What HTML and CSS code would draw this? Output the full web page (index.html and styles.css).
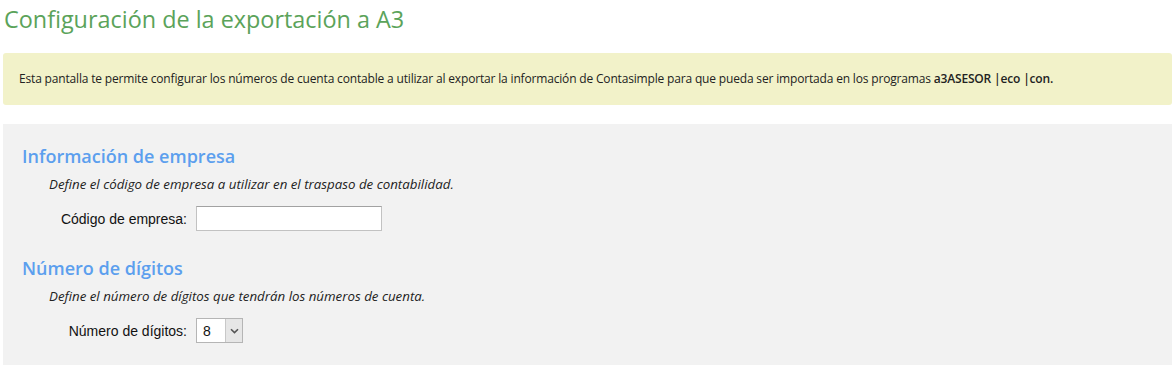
FILE: index.html
```html
<!DOCTYPE html>
<html lang="es">
<head>
    <meta charset="UTF-8">
    <title>Configuración de la exportación a A3</title>
    <link rel="stylesheet" href="styles.css">
</head>
<body>
    <div class="page">
        <h1 class="page-title">Configuración de la exportación a A3</h1>

        <div class="notice">
            Esta pantalla te permite configurar los números de cuenta contable a utilizar al exportar la información de Contasimple para que pueda ser importada en los programas <strong>a3ASESOR |eco |con.</strong>
        </div>

        <div class="panel">
            <h2 class="section-title">Información de empresa</h2>
            <p class="section-desc">Define el código de empresa a utilizar en el traspaso de contabilidad.</p>
            <div class="form-row">
                <label class="form-label" for="companyCode">Código de empresa:</label>
                <input class="text-input" type="text" id="companyCode">
            </div>

            <h2 class="section-title">Número de dígitos</h2>
            <p class="section-desc">Define el número de dígitos que tendrán los números de cuenta.</p>
            <div class="form-row">
                <label class="form-label" for="digits">Número de dígitos:</label>
                <div class="select-box">
                    <select class="select-input" id="digits">
                        <option>8</option>
                        <option>9</option>
                        <option>10</option>
                        <option>11</option>
                        <option>12</option>
                    </select>
                    <span class="select-arrow">
                        <svg width="9" height="6" viewBox="0 0 9 6"><path d="M1 1.2 L4.5 4.6 L8 1.2" fill="none" stroke="#555" stroke-width="1.6"/></svg>
                    </span>
                </div>
            </div>
        </div>
    </div>
</body>
</html>
```

FILE: styles.css
```css
body {
    margin: 0;
    padding: 0;
    background: #fff;
    font-family: 'Open Sans', sans-serif;
    color: #222;
    overflow: hidden;
}

.page {
    padding: 0 1px 0 3px;
}

.page-title {
    font-family: 'Open Sans', sans-serif;
    font-size: 23.4px;
    font-weight: 400;
    color: #5ba35a;
    margin: 0;
    padding: 3px 0 0 1px;
    line-height: 32px;
}

.notice {
    background: #f2f2c9;
    border-radius: 3px;
    margin-top: 18px;
    padding: 17px 16px;
    font-size: 12px;
    line-height: 18px;
    letter-spacing: -0.17px;
    color: #222;
}

.notice strong {
    font-weight: 600;
}

.panel {
    background: #f2f2f2;
    margin-top: 19px;
    padding: 19px 19px 0;
    height: 222px;
}

.section-title {
    font-family: 'Open Sans', sans-serif;
    font-size: 18px;
    font-weight: 600;
    color: #5c9fee;
    margin: 0;
    line-height: 26px;
}

.section-desc {
    font-size: 13.3px;
    font-style: italic;
    margin: 6px 0 0 27px;
    line-height: 18px;
    color: #222;
}

.form-row {
    display: flex;
    align-items: center;
    margin: 13px 0 24px;
}

.form-label {
    width: 165px;
    text-align: right;
    margin-right: 9px;
    font-family: 'Liberation Sans', Arial, sans-serif;
    font-size: 14px;
    color: #111;
}

.text-input {
    box-sizing: border-box;
    width: 186px;
    height: 25px;
    border: 1px solid #c2c2c2;
    border-top-color: #a2a2a2;
    background: #fff;
    padding: 2px 4px;
    font-family: 'Liberation Sans', Arial, sans-serif;
    font-size: 14px;
    outline: none;
}

.select-box {
    display: flex;
    box-sizing: border-box;
    width: 47px;
    height: 25px;
    border: 1px solid #b5b5b5;
    background: #fff;
}

.select-input {
    -webkit-appearance: none;
    appearance: none;
    border: none;
    background: #fff;
    width: 29px;
    padding: 0 0 0 6px;
    font-family: 'Liberation Sans', Arial, sans-serif;
    font-size: 14px;
    color: #111;
    outline: none;
}

.select-arrow {
    display: flex;
    align-items: center;
    justify-content: center;
    width: 16px;
    background: #e6e6e6;
    border-left: 1px solid #c8c8c8;
}
```
